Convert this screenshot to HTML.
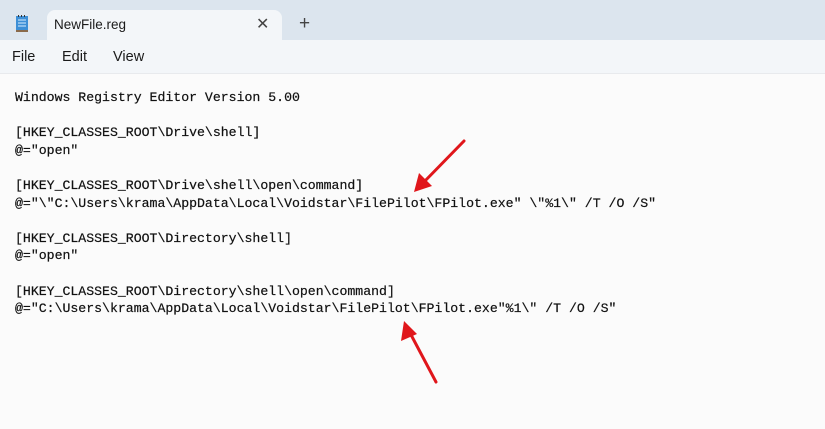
<!DOCTYPE html>
<html><head><style>
body{margin:0;width:825px;height:429px;overflow:hidden;background:#fbfbfb;font-family:"Liberation Sans",sans-serif;position:relative}
.title{position:absolute;left:0;top:0;width:825px;height:40px;background:#dce5ee}
.tab{position:absolute;left:47px;top:10px;width:235px;height:32px;background:#f3f6f9;border-radius:8px 8px 0 0}
.menu{position:absolute;left:0;top:40px;width:825px;height:33px;background:#f3f6f9;border-bottom:1px solid #e8eaed}
.t{position:absolute;font-size:14.5px;color:#1a1a1a}
pre{position:absolute;left:15px;top:89px;margin:0;font-family:"Liberation Mono",monospace;font-size:13.2px;line-height:17.6px;color:#111;-webkit-text-stroke:0.2px #111}
</style></head><body>
<div class="title"></div>
<div class="tab"></div>
<svg style="position:absolute;left:15px;top:15px" width="14" height="18" viewBox="0 0 14 18"><rect x="1" y="1" width="12" height="15" fill="#3d8fd6"/><rect x="1" y="15" width="12" height="2" fill="#8a6a4a"/><g stroke="#d8ecff" stroke-width="1"><line x1="3" y1="5" x2="11" y2="5"/><line x1="3" y1="8" x2="11" y2="8"/><line x1="3" y1="11" x2="11" y2="11"/></g><g fill="#333"><rect x="3" y="0" width="1" height="2"/><rect x="6" y="0" width="1" height="2"/><rect x="9" y="0" width="1" height="2"/></g></svg>
<div class="t" style="left:54px;top:17px;font-size:13.5px">NewFile.reg</div>
<div class="t" style="left:256px;top:14px;font-size:16px;color:#444">✕</div>
<div class="t" style="left:299px;top:13px;font-size:19px;color:#444">+</div>
<div class="menu"></div>
<div class="t" style="left:12px;top:49px">File</div>
<div class="t" style="left:62px;top:49px">Edit</div>
<div class="t" style="left:113px;top:49px">View</div>
<pre>Windows Registry Editor Version 5.00

[HKEY_CLASSES_ROOT\Drive\shell]
@="open"

[HKEY_CLASSES_ROOT\Drive\shell\open\command]
@="\"C:\Users\krama\AppData\Local\Voidstar\FilePilot\FPilot.exe" \"%1\" /T /O /S"

[HKEY_CLASSES_ROOT\Directory\shell]
@="open"

[HKEY_CLASSES_ROOT\Directory\shell\open\command]
@="C:\Users\krama\AppData\Local\Voidstar\FilePilot\FPilot.exe"%1\" /T /O /S"</pre>
<svg style="position:absolute;left:0;top:0" width="825" height="429">
<g stroke="#e0161b" stroke-width="3" stroke-linecap="round"><line x1="464" y1="141" x2="422" y2="184"/><line x1="436" y1="382" x2="409" y2="331"/></g>
<polygon points="414,192 419,173 432,186" fill="#e0161b"/>
<polygon points="404,321 401,341 417,334" fill="#e0161b"/>
</svg>
</body></html>
